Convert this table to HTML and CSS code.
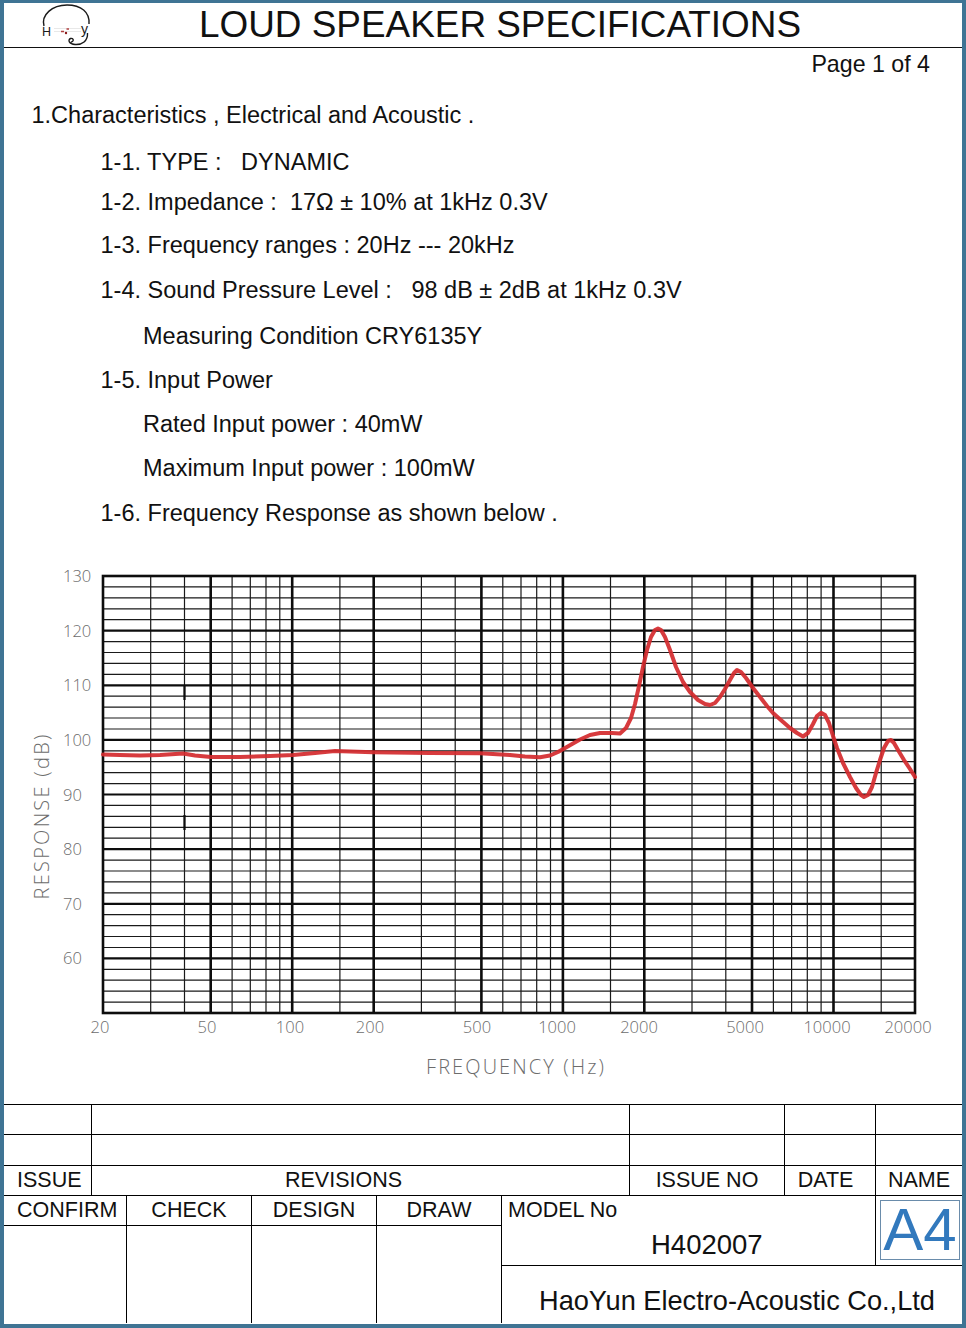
FILE: index.html
```html
<!DOCTYPE html>
<html lang="en">
<head>
<meta charset="utf-8">
<title>Loud Speaker Specifications</title>
<link rel="stylesheet" href="styles.css">
</head>
<body>
<div class="page">
  <header class="head">
    <svg class="logo" viewBox="0 0 56 44" width="56" height="44" aria-label="HY logo">
      <path d="M6 23 C3 12 14 2 29 2 C43 2 52 9 51 21" fill="none" stroke="#1a1a1a" stroke-width="1.4"/>
      <path d="M16 25.5H43 M16 28.5H43" stroke="#e2e2e2" stroke-width="0.8"/>
      <text class="logo-t" x="4" y="33" font-size="12.5">H</text>
      <text class="logo-t" x="43" y="31" font-size="14">y</text>
      <path d="M23 28.5h3 M28.5 26h2.5" stroke="#b04040" stroke-width="1.3"/>
      <circle cx="28" cy="30" r="1.2" fill="#8b1a1a"/>
      <path d="M49.5 30 C50 38 44 42 37 41.5 C31 41 29.5 37 32.5 35.5 C35.5 34.5 36.5 38.5 33 39" fill="none" stroke="#1a1a1a" stroke-width="1.4"/>
    </svg>
    <h1 class="title">LOUD SPEAKER SPECIFICATIONS</h1>
  </header>

  <div class="pageno">Page 1 of 4</div>

  <section class="spec">
    <p class="line sec">1.Characteristics , Electrical and Acoustic .</p>
    <p class="line item l-type">1-1. TYPE :   DYNAMIC</p>
    <p class="line item l-imp">1-2. Impedance :  17Ω ± 10% at 1kHz 0.3V</p>
    <p class="line item l-freq">1-3. Frequency ranges : 20Hz --- 20kHz</p>
    <p class="line item l-spl">1-4. Sound Pressure Level :   98 dB ± 2dB at 1kHz 0.3V</p>
    <p class="line sub l-meas">Measuring Condition CRY6135Y</p>
    <p class="line item">1-5. Input Power</p>
    <p class="line sub">Rated Input power : 40mW</p>
    <p class="line sub">Maximum Input power : 100mW</p>
    <p class="line item l-resp">1-6. Frequency Response as shown below .</p>
  </section>

  <svg class="chart" viewBox="4 535 958 569" width="958" height="569" aria-label="Frequency response chart">
    <path class="g-thin" d="M103 586.9H915 M103 597.9H915 M103 608.8H915 M103 619.7H915
      M103 641.6H915 M103 652.5H915 M103 663.4H915 M103 674.3H915
      M103 696.2H915 M103 707.1H915 M103 718H915 M103 729H915
      M103 750.8H915 M103 761.7H915 M103 772.7H915 M103 783.6H915
      M103 805.4H915 M103 816.4H915 M103 827.3H915 M103 838.2H915
      M103 860.1H915 M103 871H915 M103 881.9H915 M103 892.8H915
      M103 914.7H915 M103 925.6H915 M103 936.5H915 M103 947.5H915
      M103 969.3H915 M103 980.2H915 M103 991.2H915 M103 1002.1H915"/>
    <path class="g-thin" d="M150.7 576V1013 M184.5 576V1013 M232.1 576V1013 M250.3 576V1013 M266 576V1013 M279.8 576V1013
      M339.9 576V1013 M421.4 576V1013 M455.2 576V1013 M502.8 576V1013 M521 576V1013 M536.7 576V1013 M550.5 576V1013
      M610.5 576V1013 M692 576V1013 M725.8 576V1013 M773.4 576V1013 M791.6 576V1013 M807.3 576V1013 M821.1 576V1013
      M881.2 576V1013"/>
    <path class="g-mid" d="M103 630.6H915 M103 685.3H915 M103 739.9H915 M103 794.5H915 M103 849.1H915 M103 903.8H915 M103 958.4H915"/>
    <path class="g-thick" d="M210.7 576V1013 M292.2 576V1013 M373.7 576V1013 M481.4 576V1013 M562.9 576V1013 M644.3 576V1013 M752 576V1013 M833.5 576V1013"/>
    <path class="g-mid" d="M184.5 686V700 M184.5 815V830"/>
    <rect class="g-frame" x="103" y="576" width="812" height="437"/>

    <polyline class="curve" points="103,754.5 120,755 140,755.5 160,755 183,753.5 195,755.5 211,757 240,757 270,756 293,755 315,753 335,751 373,752.3 430,753 480,753.3 510,755 525,756.5 540,757.3 550,755.5 558,752 566,747.5 580,739.5 590,735 600,733 612,733 620,733.5 626,728 631,718 635,704 639,686 643,667 647,650 651,637 655,630 658,628.5 661,630 665,637 670,650 676,667 683,682 690,692 698,700 705,704 710,705 715,703 720,697 725,689 730,680 734,673 737,670 741,672 746,678 753,688 760,697 767,706 773,713 782,721 790,728 797,733 803,736.5 808,733 813,724 817,716 821,712.7 825,715 829,723 833,736 837,748 843,763 850,777 856,788 861,795 864,797 868,795 872,787 876,773 880,760 884,748 888,741 891,740 894,743 898,750 904,760 910,769 915,777"/>

    <g class="ax">
      <text x="63" y="582">130</text>
      <text x="63" y="636.6">120</text>
      <text x="63" y="691.3">110</text>
      <text x="63" y="745.9">100</text>
      <text x="63" y="800.5">90</text>
      <text x="63" y="855.1">80</text>
      <text x="63" y="909.8">70</text>
      <text x="63" y="964.4">60</text>
    </g>
    <g class="ax ax-x">
      <text x="100" y="1033">20</text>
      <text x="207" y="1033">50</text>
      <text x="290" y="1033">100</text>
      <text x="370" y="1033">200</text>
      <text x="477" y="1033">500</text>
      <text x="557" y="1033">1000</text>
      <text x="639" y="1033">2000</text>
      <text x="745" y="1033">5000</text>
      <text x="827" y="1033">10000</text>
      <text x="908" y="1033">20000</text>
    </g>
    <text class="ax ax-title" transform="translate(49,817) rotate(-90)" text-anchor="middle" textLength="165" lengthAdjust="spacing">RESPONSE (dB)</text>
    <text class="ax ax-title" x="515" y="1074" text-anchor="middle" textLength="178" lengthAdjust="spacing">FREQUENCY (Hz)</text>
  </svg>

  <div class="tblock">
    <div class="c"></div><div class="c rev"></div><div class="c"></div><div class="c"></div><div class="c"></div>
    <div class="c"></div><div class="c rev"></div><div class="c"></div><div class="c"></div><div class="c"></div>
    <div class="c issue">ISSUE</div><div class="c rev revisions">REVISIONS</div><div class="c ctr">ISSUE NO</div><div class="c ctr date">DATE</div><div class="c ctr">NAME</div>
    <div class="c confirm">CONFIRM</div><div class="c ctr">CHECK</div><div class="c ctr">DESIGN</div><div class="c ctr">DRAW</div>
    <div class="c model"><div class="model-lbl">MODEL No</div><div class="model-no">H402007</div></div>
    <div class="c size"><span class="a4">A4</span></div>
    <div class="c sign wide"></div><div class="c sign"></div><div class="c sign"></div><div class="c sign"></div>
    <div class="c company">HaoYun Electro-Acoustic Co.,Ltd</div>
  </div>
</div>
</body>
</html>
```

FILE: styles.css
```css
html, body {
  margin: 0;
  padding: 0;
  background: #fff;
}

body {
  font-family: "Liberation Sans", Arial, sans-serif;
  color: #111;
}

.page {
  width: 966px;
  height: 1328px;
  box-sizing: border-box;
  border-style: solid;
  border-color: #3f7494;
  border-width: 3px 4px 4px 4px;
  display: flex;
  flex-direction: column;
  background: #fff;
  overflow: hidden;
}

/* header */
.head {
  flex: none;
  height: 44px;
  border-bottom: 1px solid #111;
  display: flex;
  align-items: center;
}

.logo {
  flex: none;
  width: 56px;
  height: 44px;
  margin-left: 34px;
}

.logo-t {
  font-family: "Liberation Sans", Arial, sans-serif;
  fill: #1a1a1a;
}

.title {
  margin: 0 0 0 105px;
  font-weight: normal;
  font-size: 36.9px;
  line-height: 44px;
  color: #111;
}

.pageno {
  flex: none;
  height: 33px;
  line-height: 33px;
  font-size: 23.2px;
  text-align: right;
  padding-right: 32px;
}

/* specification list */
.spec {
  flex: none;
  height: 454px;
  box-sizing: border-box;
  padding-top: 12px;
  font-size: 23.5px;
}

.line {
  margin: 0;
  line-height: 44px;
  white-space: pre;
}

.sec  { padding-left: 27.5px; }
.item { padding-left: 96.5px; }
.sub  { padding-left: 139px; }

.l-type { margin-top: 3px; }
.l-imp  { margin-top: -4px; }
.l-freq { margin-top: -1px; }
.l-spl  { margin-top: 1px; }
.l-meas { margin-top: 2px; }
.l-resp { margin-top: 1px; }

/* chart */
.chart {
  flex: none;
  display: block;
  width: 958px;
  height: 569px;
}

.g-thin {
  fill: none;
  stroke: #1a1a1a;
  stroke-width: 1.2;
}

.g-mid {
  fill: none;
  stroke: #0d0d0d;
  stroke-width: 2.2;
}

.g-thick {
  fill: none;
  stroke: #0d0d0d;
  stroke-width: 2.6;
}

.g-frame {
  fill: none;
  stroke: #0d0d0d;
  stroke-width: 2.6;
}

.curve {
  fill: none;
  stroke: #d42a2e;
  stroke-opacity: 0.92;
  stroke-width: 4;
  stroke-linejoin: round;
  stroke-linecap: round;
}

.ax {
  font-family: "Open Sans", "DejaVu Sans", sans-serif;
  font-weight: 300;
  font-size: 16.5px;
  fill: #6c6c6c;
}

.ax-x text {
  text-anchor: middle;
}

.ax-title {
  font-size: 20px;
}

/* title block */
.tblock {
  flex: none;
  display: grid;
  grid-template-columns: 87px 34px 124px 124px 124px 127px 154px 90px 86px;
  grid-template-rows: 29px 30px 29px 29px 39px 57px;
  gap: 1px;
  background: #000;
  border-top: 1px solid #000;
}

.c {
  background: #fff;
  font-size: 21.5px;
  line-height: 29px;
  white-space: nowrap;
}

.rev { grid-column: span 5; }

.issue { padding-left: 13px; }

.revisions {
  text-align: center;
  padding-right: 34px;
}

.ctr { text-align: center; }

.date { padding-right: 9px; }

.confirm {
  grid-column: span 2;
  padding-left: 13px;
}

.model {
  grid-column: span 3;
  grid-row: span 2;
  padding-left: 6px;
}

.model-no {
  font-size: 27.5px;
  line-height: 40px;
  padding-left: 143px;
}

.size {
  grid-row: span 2;
  display: flex;
  padding: 4px 2px 5px 4px;
}

.a4 {
  flex: 1;
  border: 1px solid #6a8cab;
  color: #3279bd;
  font-size: 60px;
  line-height: 58px;
  text-align: center;
}

.sign { grid-row: span 2; }
.wide { grid-column: span 2; }

.company {
  grid-column: 6 / 10;
  font-size: 27.2px;
  line-height: 45px;
  padding-left: 37px;
  padding-top: 12px;
}
```
